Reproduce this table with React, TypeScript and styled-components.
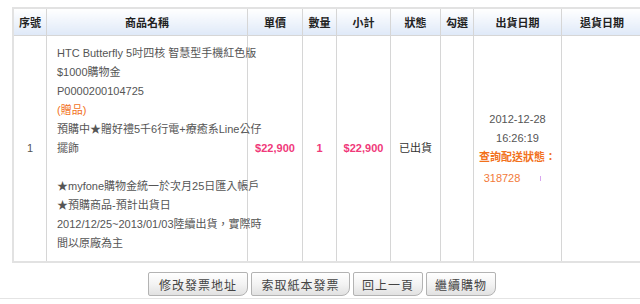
import React, { FC } from "react";
import styled, { createGlobalStyle } from "styled-components";

const GlobalStyle = createGlobalStyle`
	body {
		margin: 0;
		background: #fff;
		font-family: "Liberation Sans", "Noto Sans CJK TC", sans-serif;
	}
`;

const Page = styled.div`
	width: 640px;
	height: 304px;
	padding: 7px 8px 0 12px;
	box-sizing: border-box;
	overflow: hidden;
`;

const Table = styled.table`
	width: 620px;
	border-collapse: collapse;
	table-layout: fixed;
	border: 2px solid #e2e2e2;
	font-size: 11px;
	color: #555;
`;

const Head = styled.th<{ $w: number }>`
	width: ${p => p.$w}px;
	height: 26px;
	padding: 0;
	border: 1px solid #d6d6d6;
	background: linear-gradient(to bottom, #ffffff 0%, #dfe9f8 100%);
	color: #222;
	font-weight: 700;
	font-size: 11px;
	text-align: center;
	vertical-align: middle;
`;

const Cell = styled.td<{ $tone?: "pink" | "dark" }>`
	border: 1px solid #d6d6d6;
	padding: 8px 0;
	text-align: center;
	vertical-align: middle;
	line-height: 19px;
	color: ${p => (p.$tone === "pink" ? "#f0397a" : p.$tone === "dark" ? "#333" : "#555")};
	font-weight: ${p => (p.$tone === "pink" ? 700 : 400)};
`;

const NameCell = styled(Cell)`
	text-align: left;
	padding-left: 10px;
`;

const Line = styled.div<{ $orange?: boolean }>`
	white-space: nowrap;
	height: 19px;
	color: ${p => (p.$orange ? "#f2711c" : "inherit")};
`;

const Query = styled.div`
	color: #f2711c;
	font-weight: 700;
`;

const Tracking = styled.div`
	color: #f27a3a;
	padding-top: 2px;
	display: flex;
	justify-content: center;
	align-items: center;
`;

const Number = styled.span`
	white-space: nowrap;
	margin-left: -10px;
`;

const Tick = styled.span`
	display: inline-block;
	width: 1px;
	height: 5px;
	margin-left: 20px;
	background: #d9a6f0;
`;

const Actions = styled.div`
	display: flex;
	justify-content: center;
	gap: 3px;
	margin: 9px -8px 0 -12px;
	padding: 0 0 2px 4px;
	border-bottom: 1px solid #e4e4e4;
`;

const Button = styled.button<{ $w: number }>`
	width: ${p => p.$w}px;
	height: 24px;
	padding: 0;
	border: 1px solid #b3b3b3;
	border-radius: 2px 2px 8px 2px;
	background: linear-gradient(to bottom, #ffffff 0%, #f3f3f3 50%, #e2e2e2 100%);
	color: #444;
	font-family: inherit;
	font-size: 12px;
	letter-spacing: 1px;
	cursor: pointer;
`;

const columns: [string, number][] = [
	["序號", 32],
	["商品名稱", 200],
	["單價", 54],
	["數量", 33],
	["小計", 53],
	["狀態", 49],
	["勾選", 32],
	["出貨日期", 87],
	["退貨日期", 80],
];

const buttons: [string, number][] = [
	["修改發票地址", 100],
	["索取紙本發票", 99],
	["回上一頁", 70],
	["繼續購物", 70],
];

const App: FC = () => {
	return (
		<Page>
			<GlobalStyle />
			<Table>
				<thead>
					<tr>
						{columns.map(([label, w]) => (
							<Head key={label} $w={w}>{label}</Head>
						))}
					</tr>
				</thead>
				<tbody>
					<tr>
						<Cell>1</Cell>
						<NameCell>
							<Line>HTC Butterfly 5吋四核 智慧型手機紅色版</Line>
							<Line>$1000購物金</Line>
							<Line>P0000200104725</Line>
							<Line $orange>(贈品)</Line>
							<Line>預購中★贈好禮5千6行電+療癒系Line公仔</Line>
							<Line>擺飾</Line>
							<Line />
							<Line>★myfone購物金統一於次月25日匯入帳戶</Line>
							<Line>★預購商品-預計出貨日</Line>
							<Line>2012/12/25~2013/01/03陸續出貨，實際時</Line>
							<Line>間以原廠為主</Line>
						</NameCell>
						<Cell $tone="pink">$22,900</Cell>
						<Cell $tone="pink">1</Cell>
						<Cell $tone="pink">$22,900</Cell>
						<Cell $tone="dark">已出貨</Cell>
						<Cell />
						<Cell>
							<div>2012-12-28</div>
							<div>16:26:19</div>
							<Query>查詢配送狀態：</Query>
							<Tracking>
								<Number>318728</Number>
								<Tick />
							</Tracking>
						</Cell>
						<Cell />
					</tr>
				</tbody>
			</Table>
			<Actions>
				{buttons.map(([label, w]) => (
					<Button key={label} $w={w}>{label}</Button>
				))}
			</Actions>
		</Page>
	);
};

export default App;
